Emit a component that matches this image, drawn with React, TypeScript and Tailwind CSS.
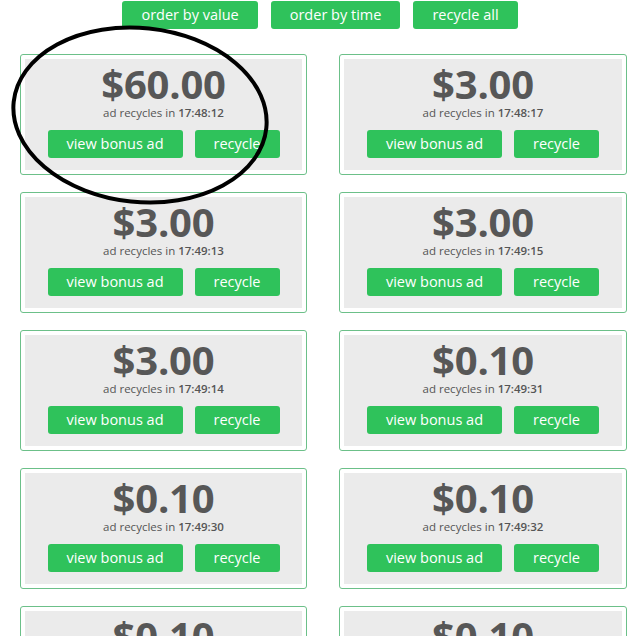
import React from 'react'

interface Ad {
  value: string
  time: string
}

const ads: Ad[] = [
  { value: '$60.00', time: '17:48:12' },
  { value: '$3.00', time: '17:48:17' },
  { value: '$3.00', time: '17:49:13' },
  { value: '$3.00', time: '17:49:15' },
  { value: '$3.00', time: '17:49:14' },
  { value: '$0.10', time: '17:49:31' },
  { value: '$0.10', time: '17:49:30' },
  { value: '$0.10', time: '17:49:32' },
  { value: '$0.10', time: '17:49:33' },
  { value: '$0.10', time: '17:49:34' },
]

const GreenButton = ({ children, className = '' }: { children: React.ReactNode; className?: string }) => (
  <button
    className={`h-[28px] rounded-[3px] bg-[#2fc25b] text-[14.5px] leading-[28px] text-white ${className}`}
  >
    {children}
  </button>
)

const AdCard = ({ ad }: { ad: Ad }) => (
  <div className="rounded-[3px] border border-[#6cc089] p-[4px]">
    <div className="flex flex-col items-center bg-[#ebebeb] pt-[7px] pb-[12px]">
      <p className="text-[40px] font-bold leading-[36px] tracking-[-0.2px] text-[#575757]">{ad.value}</p>
      <p className="mt-[4px] text-[11.5px] leading-[14px] text-[#555555]">
        ad recycles in <span className="font-semibold">{ad.time}</span>
      </p>
      <div className="mt-[10px] flex gap-[12px]">
        <GreenButton className="w-[135px]">view bonus ad</GreenButton>
        <GreenButton className="w-[85px]">recycle</GreenButton>
      </div>
    </div>
  </div>
)

const App = () => {
  return (
    <div className="relative h-[636px] w-[632px] overflow-hidden bg-white" style={{ fontFamily: '"Open Sans", sans-serif' }}>
      <div className="flex justify-center gap-[13px] pt-[1px] pl-[8px]">
        <GreenButton className="px-[19px]">order by value</GreenButton>
        <GreenButton className="px-[19px]">order by time</GreenButton>
        <GreenButton className="px-[19px]">recycle all</GreenButton>
      </div>
      <div className="mt-[25px] grid grid-cols-[287px_288px] gap-x-[32px] gap-y-[17px] pl-[20px]">
        {ads.map((ad, index) => (
          <AdCard key={index} ad={ad} />
        ))}
      </div>
      <svg className="pointer-events-none absolute top-0 left-0" width="632" height="636">
        <ellipse
          cx="140"
          cy="115"
          rx="127"
          ry="87"
          transform="rotate(6 140 115)"
          fill="none"
          stroke="#000"
          strokeWidth="4"
        />
      </svg>
    </div>
  )
}

export default App
